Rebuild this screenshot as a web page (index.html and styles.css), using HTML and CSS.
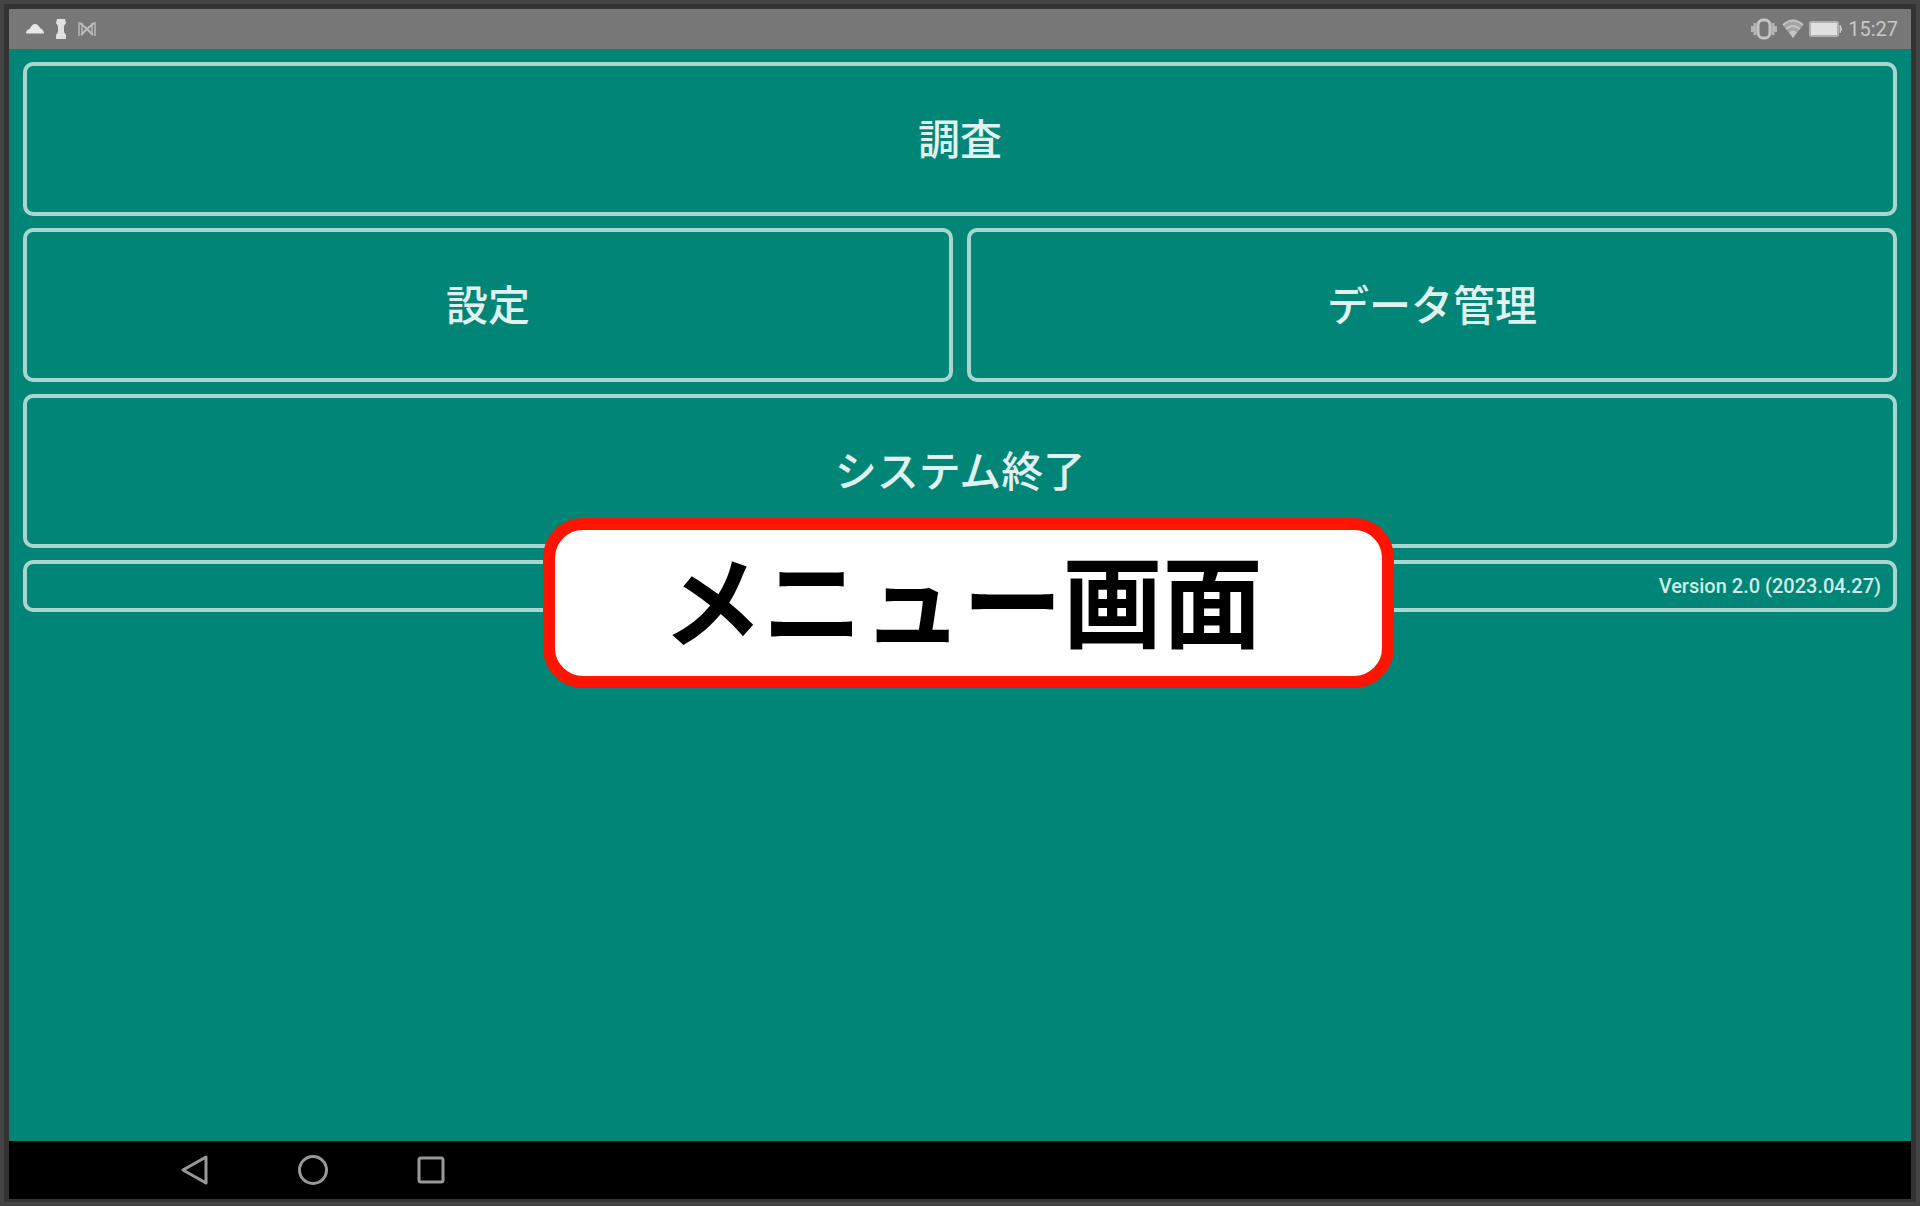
FILE: index.html
```html
<!DOCTYPE html>
<html lang="ja">
<head>
<meta charset="utf-8">
<meta name="viewport" content="width=device-width, initial-scale=1">
<title>メニュー画面</title>
<link rel="stylesheet" href="styles.css">
</head>
<body>
<div class="device">
  <header class="status">
    <div class="status-group">
      <svg class="status-icon" width="20" height="20" viewBox="0 0 20 20" aria-hidden="true"><path d="M1 14.500Q1 11 5 9.500Q7 5 10 5Q13 5 15 9Q19 11 19 14.500Z" fill="#e8e8e8"/></svg>
      <svg class="status-icon" width="12" height="20" viewBox="0 0 12 20" aria-hidden="true"><path d="M2 0H10L11 4L9 7V13L11 16V20H1V16L3 13V7L1 4Z" fill="#e0e0e0"/></svg>
      <svg class="status-icon" width="20" height="20" viewBox="0 0 20 20" aria-hidden="true"><path d="M2 3V17M18 3V17M5 4V16M15 4V16" fill="none" stroke="#a8a8a8" stroke-width="2"/><path d="M3 4L10 10L17 4M4 16L10 10L16 16" fill="none" stroke="#bdbdbd" stroke-width="2"/></svg>
    </div>
    <div class="status-group status-right">
      <svg class="status-icon" width="26" height="22" viewBox="0 0 26 22" aria-hidden="true"><rect x="7" y="2" width="12" height="18" rx="5" fill="none" stroke="#c4c4c4" stroke-width="3"/><path d="M4 5V17M22 5V17M1 8V14M25 8V14" stroke="#b4b4b4" stroke-width="3"/></svg>
      <svg class="status-icon" width="22" height="20" viewBox="0 0 22 20" aria-hidden="true"><path d="M1 6Q11-3 21 6L11 19Z" fill="#a4a4a4"/><path d="M1 6Q11-3 21 6M4 10Q11 4 18 10" fill="none" stroke="#c4c4c4" stroke-width="2"/><path d="M7 13Q11 10 15 13L11 19Z" fill="#c4c4c4"/></svg>
      <svg class="status-icon" width="34" height="18" viewBox="0 0 34 18" aria-hidden="true"><rect x="1" y="2" width="28" height="14" rx="1" fill="#e0e0e0" stroke="#b0b0b0" stroke-width="2"/><path d="M31 5Q34 9 31 13Z" fill="#c8c8c8" stroke="#c8c8c8"/></svg>
      <time class="clock">15:27</time>
    </div>
  </header>
  <main class="menu">
    <button class="tile wide" type="button">調査</button>
    <button class="tile" type="button">設定</button>
    <button class="tile" type="button">データ管理</button>
    <button class="tile wide" type="button">システム終了</button>
    <p class="version wide">Version 2.0 (2023.04.27)</p>
  </main>
  <nav class="navbar" aria-label="ナビゲーション">
    <button class="nav-button" type="button" aria-label="戻る"><svg width="32" height="32" viewBox="0 0 32 32"><path d="M4 16L27 3V29Z" fill="none" stroke="#999" stroke-width="3" stroke-linejoin="round"/></svg></button>
    <button class="nav-button" type="button" aria-label="ホーム"><svg width="32" height="32" viewBox="0 0 32 32"><circle cx="16" cy="16" r="13.500" fill="none" stroke="#999" stroke-width="3"/></svg></button>
    <button class="nav-button" type="button" aria-label="最近使ったアプリ"><svg width="32" height="32" viewBox="0 0 32 32"><rect x="4" y="4" width="24" height="24" rx="2" fill="none" stroke="#999" stroke-width="3"/></svg></button>
  </nav>
  <div class="callout">メニュー画面</div>
</div>
</body>
</html>
```
FILE: styles.css
```css
* {
  box-sizing: border-box;
}

body {
  margin: 0;
  background: #444;
  font-family: Roboto, "Noto Sans CJK JP", sans-serif;
}

.device {
  position: relative;
  display: flex;
  flex-direction: column;
  min-height: 100vh;
  border: 4px solid #444;
  padding: 5px 5px 3px;
  background: #343434;
}

.status {
  display: flex;
  justify-content: space-between;
  align-items: center;
  height: 40px;
  padding: 0 13px 0 16px;
  background: #777;
}

.status-group {
  display: flex;
  align-items: center;
  gap: 10px;
}

.status-right {
  gap: 5px;
}

.status-icon {
  display: block;
}

.clock {
  color: #c8c8c8;
  font-size: 20px;
  line-height: 24px;
}

.menu {
  flex: 1;
  display: grid;
  grid-template-columns: 1fr 1fr;
  align-content: start;
  gap: 12px 14px;
  padding: 13px 14px;
  background: #008577;
}

.wide {
  grid-column: 1 / -1;
}

.tile {
  height: 154px;
  border: 4px solid #a9d7d0;
  border-radius: 10px;
  padding: 4px 0 0;
  background: transparent;
  color: #e0f2ef;
  font-family: inherit;
  font-size: 42px;
  font-weight: 500;
  line-height: 60px;
}

.version {
  margin: 0;
  height: 52px;
  border: 4px solid #a9d7d0;
  border-radius: 10px;
  padding: 0 12px;
  color: #d3ebe8;
  font-size: 20px;
  font-weight: 500;
  line-height: 44px;
  text-align: right;
}

.navbar {
  display: flex;
  align-items: center;
  gap: 86px;
  height: 58px;
  padding-left: 170px;
  background: #000;
}

.nav-button {
  display: block;
  width: 32px;
  height: 32px;
  border: 0;
  padding: 0;
  background: transparent;
}

.nav-button svg {
  display: block;
}

.callout {
  position: absolute;
  top: 514px;
  left: 28.2%;
  width: 44.5%;
  border: 12px solid #ff1400;
  border-radius: 40px;
  padding: 0 12px 12px 0;
  background: #fff;
  color: #000;
  font-family: "Noto Sans CJK JP", sans-serif;
  font-size: 100px;
  font-weight: 700;
  line-height: 134px;
  text-align: center;
  white-space: nowrap;
}
```
